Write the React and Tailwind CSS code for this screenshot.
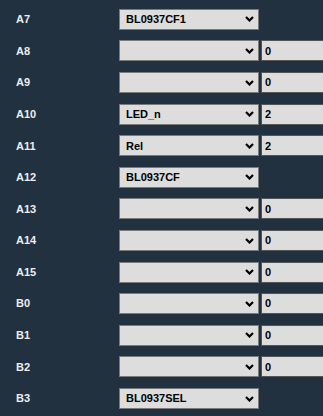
import React from "react";

const rows = [
  ["A7", "BL0937CF1", null],
  ["A8", "", "0"],
  ["A9", "", "0"],
  ["A10", "LED_n", "2"],
  ["A11", "Rel", "2"],
  ["A12", "BL0937CF", null],
  ["A13", "", "0"],
  ["A14", "", "0"],
  ["A15", "", "0"],
  ["B0", "", "0"],
  ["B1", "", "0"],
  ["B2", "", "0"],
  ["B3", "BL0937SEL", null],
];

function Chevron() {
  return (
    <svg width="9" height="6" viewBox="0 0 9 6" className="shrink-0">
      <path d="M1 1 L4.5 4.5 L8 1" fill="none" stroke="#000" strokeWidth="2.2" />
    </svg>
  );
}

export default function App() {
  return (
    <div
      className="w-[323px] h-[416px] overflow-hidden bg-[#223140] pt-[3.6px]"
      style={{ fontFamily: '"Liberation Sans", Arial, sans-serif' }}
    >
      {rows.map(([label, val, num]) => (
        <div key={label} className="flex items-center h-[31.6px]">
          <div className="w-[119px] shrink-0 pl-[16px] text-[11px] font-bold text-[#eeeeee]">
            {label}
          </div>
          <div className="w-[140px] h-[21px] shrink-0 flex items-center justify-between bg-[#dddddd] border border-[#7a7a7a] pl-[6px] pr-[4px] text-[11px] font-bold text-black">
            <span>{val}</span>
            <Chevron />
          </div>
          {num !== null && (
            <div className="ml-[2px] w-[140px] h-[21px] shrink-0 flex items-center bg-[#dddddd] border border-[#555555] pl-[3px] text-[11px] font-bold text-black">
              {num}
            </div>
          )}
        </div>
      ))}
    </div>
  );
}
